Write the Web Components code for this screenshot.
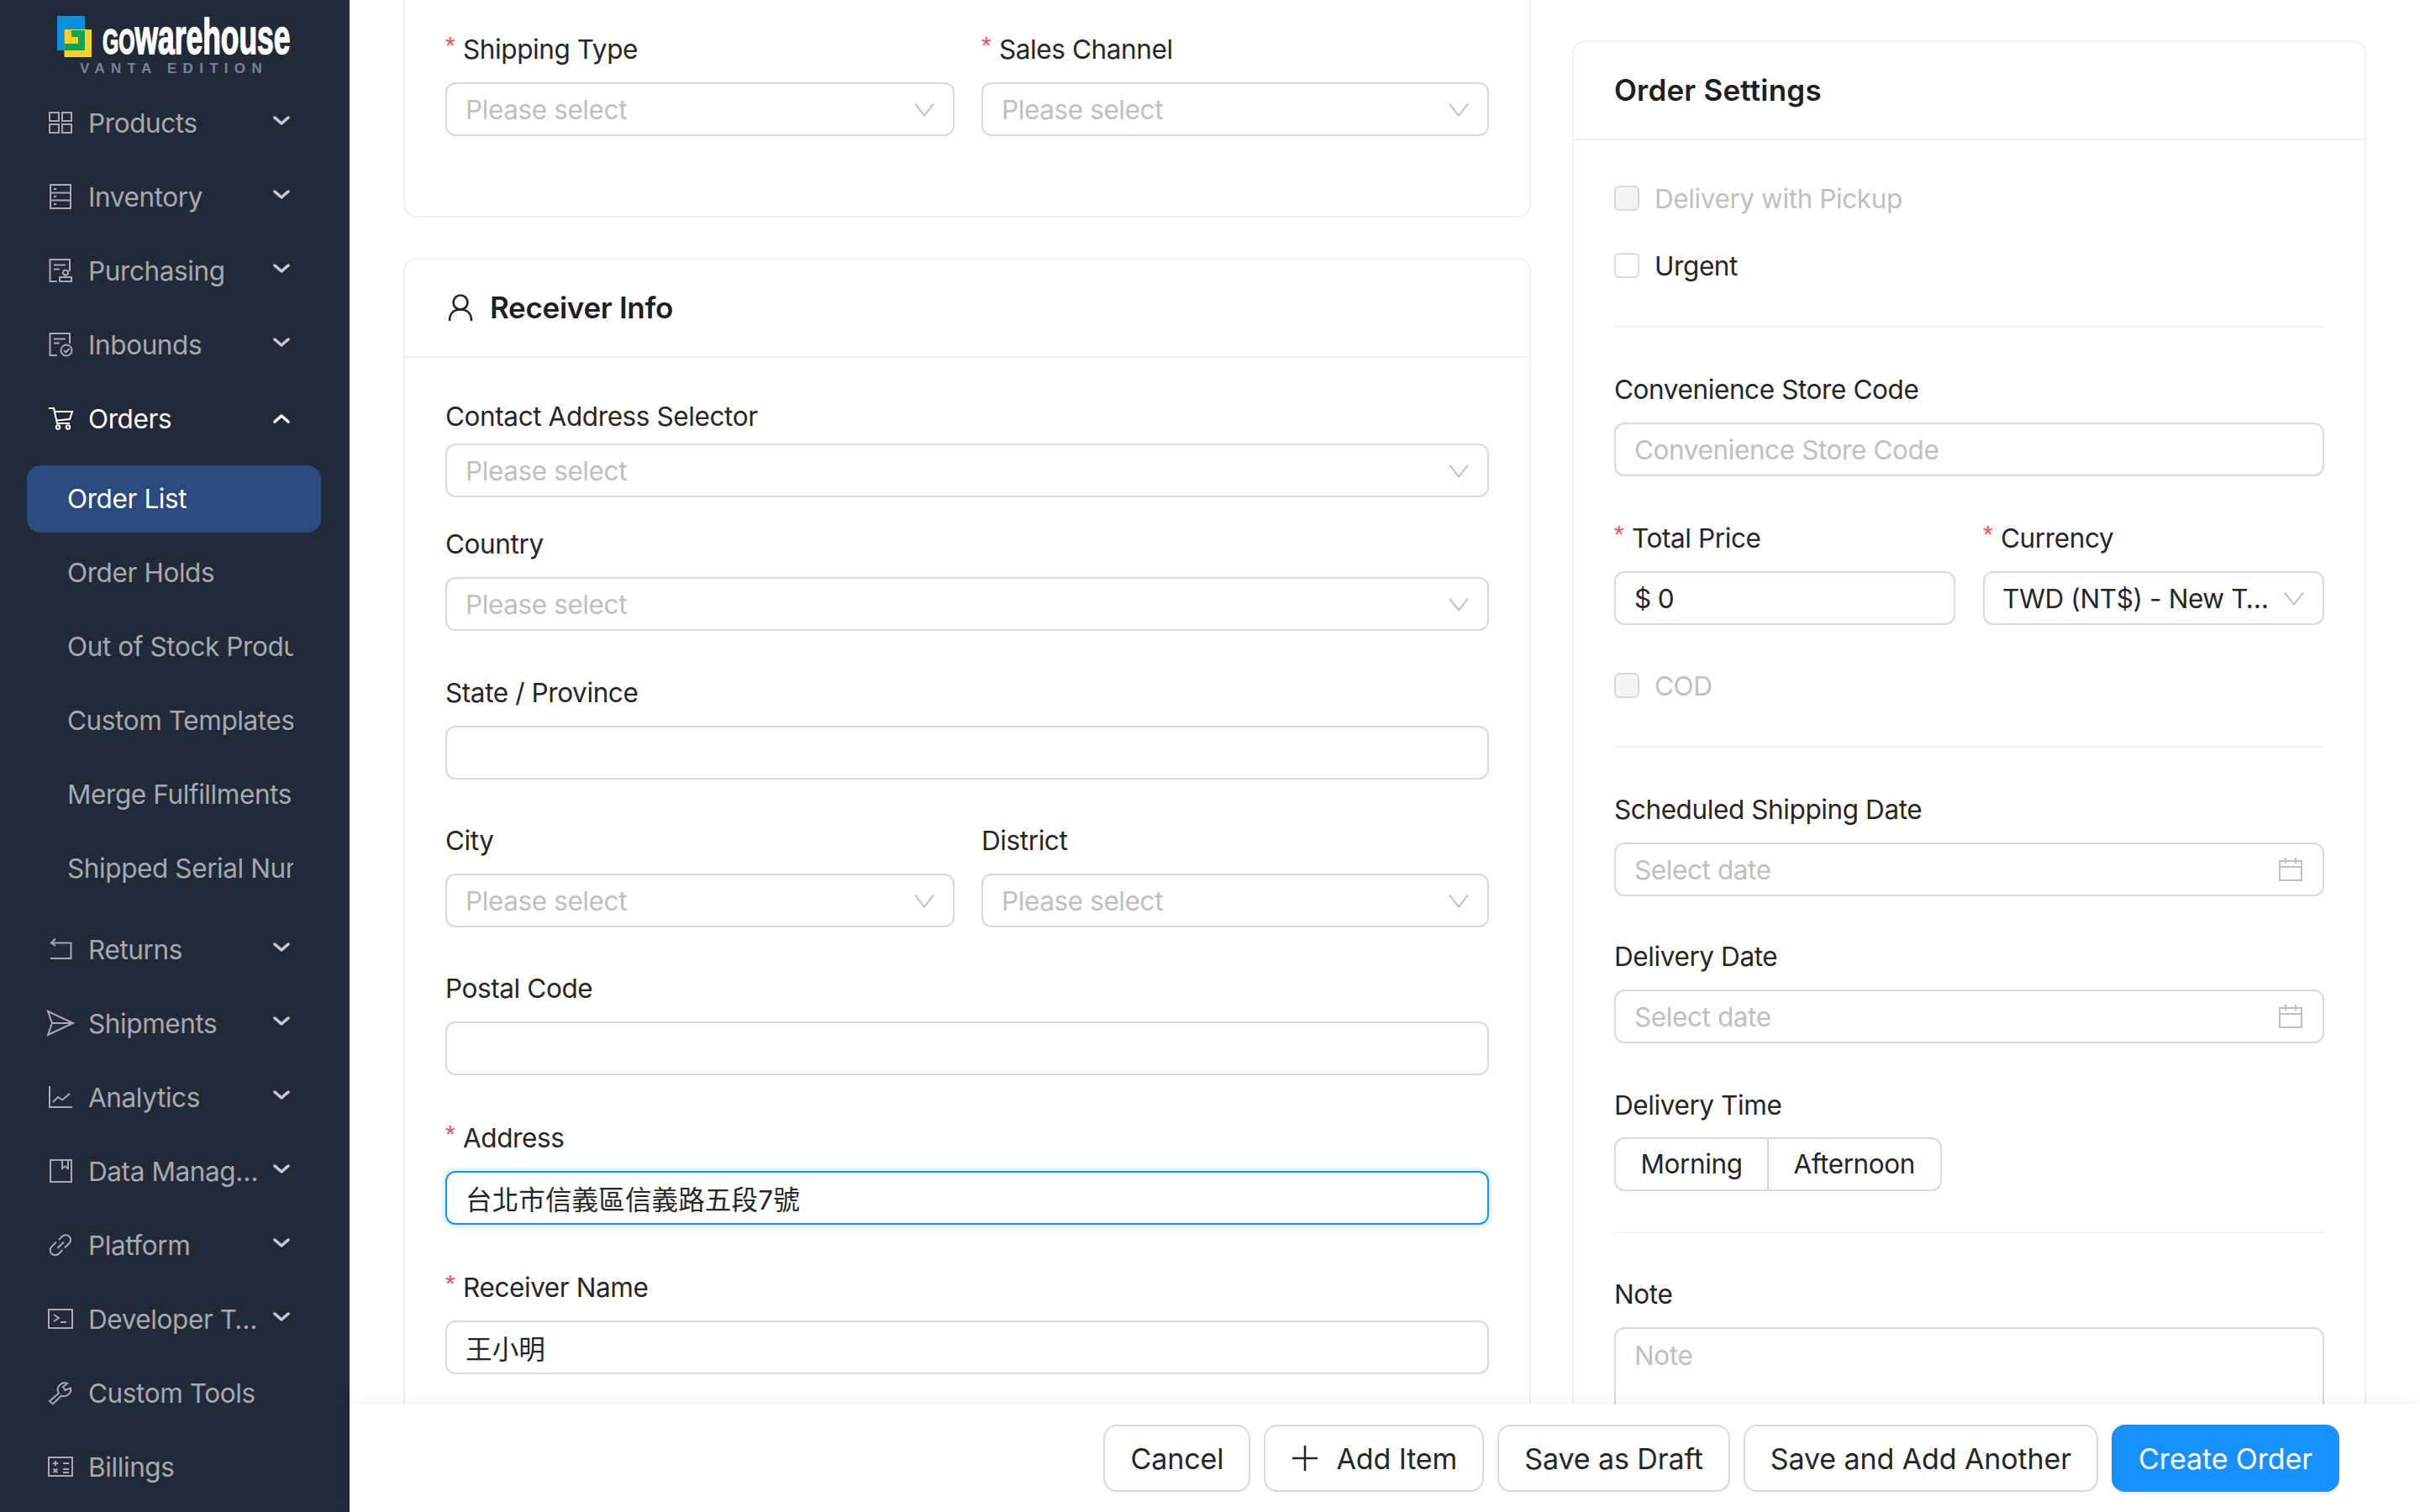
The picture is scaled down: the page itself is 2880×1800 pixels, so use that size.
<!DOCTYPE html>
<html lang="en">
<head>
<meta charset="utf-8">
<title>Create Order</title>
<style>
  html, body { margin: 0; height: 100%; background: #fff; overflow: hidden; }
  body { display: flex; font-family: Inter, "Noto Sans CJK TC", sans-serif; letter-spacing: -.4px; color: #262626; }
</style>
</head>
<body>

<side-bar>
  <nav-item icon="appstore" arrow="down">Products</nav-item>
  <nav-item icon="database" arrow="down">Inventory</nav-item>
  <nav-item icon="audit" arrow="down">Purchasing</nav-item>
  <nav-item icon="filedone" arrow="down">Inbounds</nav-item>
  <nav-item icon="cart" arrow="up" open>Orders</nav-item>
  <nav-group>
    <nav-sub active>Order List</nav-sub>
    <nav-sub>Order Holds</nav-sub>
    <nav-sub>Out of Stock Products</nav-sub>
    <nav-sub>Custom Templates</nav-sub>
    <nav-sub>Merge Fulfillments</nav-sub>
    <nav-sub>Shipped Serial Numbers</nav-sub>
  </nav-group>
  <nav-item icon="rollback" arrow="down">Returns</nav-item>
  <nav-item icon="send" arrow="down">Shipments</nav-item>
  <nav-item icon="chart" arrow="down">Analytics</nav-item>
  <nav-item icon="book" arrow="down">Data Management</nav-item>
  <nav-item icon="link" arrow="down">Platform</nav-item>
  <nav-item icon="code" arrow="down">Developer Tools</nav-item>
  <nav-item icon="tool">Custom Tools</nav-item>
  <nav-item icon="calc">Billings</nav-item>
</side-bar>

<main-pane>
  <div slot="left">
    <form-card style="--card-mt:-40px;--body-pt:76px;--body-pb:95px;--card-mb:48px">
      <div style="display:grid;grid-template-columns:606px 604px;gap:32px">
        <form-field required label="Shipping Type" style="--field-mb:0"><text-box type="select" placeholder="Please select"></text-box></form-field>
        <form-field required label="Sales Channel" style="--field-mb:0"><text-box type="select" placeholder="Please select"></text-box></form-field>
      </div>
    </form-card>

    <form-card heading="Receiver Info" icon style="--body-pt:49px;--body-pb:100px">
      <form-field label="Contact Address Selector" style="--label-gap:13px;--field-mb:35px"><text-box type="select" placeholder="Please select"></text-box></form-field>
      <form-field label="Country" style="--field-mb:53px"><text-box type="select" placeholder="Please select"></text-box></form-field>
      <form-field label="State / Province"><text-box></text-box></form-field>
      <div style="display:grid;grid-template-columns:606px 604px;gap:32px">
        <form-field label="City"><text-box type="select" placeholder="Please select"></text-box></form-field>
        <form-field label="District"><text-box type="select" placeholder="Please select"></text-box></form-field>
      </div>
      <form-field label="Postal Code" style="--field-mb:54px"><text-box></text-box></form-field>
      <form-field required label="Address" style="--field-mb:54px"><text-box focused value="台北市信義區信義路五段7號" style="--box-ls:.15px"></text-box></form-field>
      <form-field required label="Receiver Name"><text-box value="王小明" style="--box-ls:.15px"></text-box></form-field>
    </form-card>
  </div>

  <div slot="right" style="padding-top:48px">
    <form-card heading="Order Settings" style="--body-pt:49px;--body-pb:100px;--title-ls:.2px">
      <check-row disabled>Delivery with Pickup</check-row>
      <check-row>Urgent</check-row>
      <line-rule></line-rule>
      <form-field label="Convenience Store Code" style="--field-mb:53px"><text-box placeholder="Convenience Store Code"></text-box></form-field>
      <div style="display:grid;grid-template-columns:406px 406px;gap:33px">
        <form-field required label="Total Price"><text-box prefix="$" value="0"></text-box></form-field>
        <form-field required label="Currency"><text-box type="select" value="TWD (NT$) - New Taiwan Dollar" style="--box-pl:21px"></text-box></form-field>
      </div>
      <check-row disabled>COD</check-row>
      <line-rule style="--rule-mb:53px"></line-rule>
      <form-field label="Scheduled Shipping Date" style="--field-mb:51px"><text-box type="date" placeholder="Select date"></text-box></form-field>
      <form-field label="Delivery Date" style="--field-mb:53px"><text-box type="date" placeholder="Select date"></text-box></form-field>
      <form-field label="Delivery Time" style="--label-gap:19px;--field-mb:0"><radio-pair first="Morning" second="Afternoon"></radio-pair></form-field>
      <line-rule style="--rule-mt:48px;--rule-mb:52px"></line-rule>
      <form-field label="Note"><text-box type="area" placeholder="Note"></text-box></form-field>
    </form-card>
  </div>

  <action-button slot="actions">Cancel</action-button>
  <action-button slot="actions" plus>Add Item</action-button>
  <action-button slot="actions">Save as Draft</action-button>
  <action-button slot="actions">Save and Add Another</action-button>
  <action-button slot="actions" primary>Create Order</action-button>
</main-pane>

<script>
// sidebar icons, all drawn on a 28 box
const navIcons = {
  appstore: '<rect x="1" y="2" width="11" height="10"/><rect x="16" y="2" width="11" height="10"/><rect x="1" y="16" width="11" height="10"/><rect x="16" y="16" width="11" height="10"/>',
  database: '<rect x="2" y="0" width="24" height="28"/><path d="M2 9.5H26M2 18.5H26M6 5H9M6 14H9M6 23H9"/>',
  audit: '<path d="M10 27H1.500V1H25V15M6 7.500H20M6 12.500H13"/><circle cx="20" cy="16.500" r="3"/><path d="M20 19.500V22"/><rect x="13" y="22" width="14" height="5"/>',
  filedone: '<path d="M10 27H1.500V1H25V13M6 7.500H20M6 12.500H13"/><circle cx="21" cy="21" r="6.500"/><path d="M18 21L20.500 23.500L24.500 19"/>',
  cart: '<path d="M0 2H6L10 20H25M7 6H28L25 15L9 16.500"/><circle cx="11" cy="24.500" r="2.200"/><circle cx="23" cy="24.500" r="2.200"/>',
  rollback: '<path d="M8 1.500L3 6.500L8 10M3 6.500H26.500V25H2"/>',
  send: '<path d="M-1 0L29 14L-1 28L4 14ZM4 14H29"/>',
  chart: '<path d="M1 1V26H28M5 20L11 14L16 17.500L25 10"/>',
  book: '<rect x="2" y="1" width="25" height="26"/><path d="M16 1V11L19.500 8.500L23 11V1"/>',
  link: '<path d="M12 8L16 4A5.700 5.700 0 0 1 24.500 12L19 17.500M16.500 20L12 24.500A5.700 5.700 0 0 1 3.500 16L9 10.500M10.500 18L18 10.500"/>',
  code: '<rect x="0" y="3" width="28" height="22"/><path d="M6 9L12 13L6 17M14 18H21"/>',
  tool: '<path d="M1 24L12 14.500A8 8 0 0 1 22 3L17 7L19.500 11L26 8.500A8 8 0 0 1 15 17.500L5 27.500Z"/>',
  calc: '<rect x="0" y="3" width="28" height="22"/><path d="M5 10H11M8 7V13M17 10H24M5.500 16.500L10.500 21M10.500 16.500L5.500 21M17 17H24M17 21H24"/>'
};

const chevronPaths = { down: 'M2 2L10 9L18 2', up: 'M2 9L10 2L18 9' };

class SideBar extends HTMLElement {
  connectedCallback() {
    this.attachShadow({ mode: 'open' }).innerHTML = `
      <style>
        :host { display: block; flex: none; width: 416px; height: 100%; background: #222939; overflow: hidden; }
        .logo { height: 106px; box-sizing: border-box; position: relative; }
        .brand { display: flex; align-items: flex-start; padding: 19px 0 0 68px; }
        svg { flex: none; width: 41px; height: 49px; }
        .name { font: 700 60px/48px "Liberation Sans", sans-serif; letter-spacing: 0; color: #fff; -webkit-text-stroke: 1.600px #fff; margin: 1px 0 0 13px; transform: scaleX(.59); transform-origin: 0 0; white-space: nowrap; }
        .name b { font-variant-caps: small-caps; }
        .edition { position: absolute; left: 95px; top: 73px; font: 700 17px/18px "Liberation Sans", sans-serif; letter-spacing: 7.300px; color: #76849b; white-space: nowrap; }
      </style>
      <div class="logo">
        <div class="brand">
          <svg viewBox="0 0 41 49">
            <path fill="#0a8fdc" d="M0 0H33V16H8.500V41H0Z"/>
            <rect fill="#fed02b" x="8.500" y="16" width="32.500" height="33"/>
            <path fill="#0ba758" d="M17 17H33V41H8.500V33H25V25H17Z"/>
          </svg>
          <span class="name"><b>go</b>warehouse</span>
        </div>
        <span class="edition">VANTA EDITION</span>
      </div>
      <slot></slot>`;
  }
}

class NavItem extends HTMLElement {
  connectedCallback() {
    const arrow = this.getAttribute('arrow');
    this.attachShadow({ mode: 'open' }).innerHTML = `
      <style>
        :host { display: flex; align-items: center; height: 80px; margin: 0 34px 8px 32px; padding: 0 37px 0 26px; font-size: 31.500px; color: #a7a9b1; }
        :host([open]) { color: #fff; }
        .icon { flex: none; width: 28px; height: 28px; margin-right: 19px; overflow: visible; fill: none; stroke: currentColor; stroke-width: 2; }
        .text { flex: 1; min-width: 0; overflow: hidden; white-space: nowrap; text-overflow: ellipsis; }
        .arrow { flex: none; width: 20px; height: 11px; margin-left: 12px; margin-top: -6px; fill: none; stroke: #c9cbd1; stroke-width: 3.500; stroke-linecap: round; stroke-linejoin: round; }
        :host([open]) .arrow { stroke: #fff; margin-top: 0; }
      </style>
      <svg class="icon" viewBox="0 0 28 28">${navIcons[this.getAttribute('icon')]}</svg>
      <span class="text"><slot></slot></span>
      ${arrow ? `<svg class="arrow" viewBox="0 0 20 11"><path d="${chevronPaths[arrow]}"/></svg>` : ''}`;
  }
}

class NavGroup extends HTMLElement {
  connectedCallback() {
    this.attachShadow({ mode: 'open' }).innerHTML = `
      <style>:host { display: block; padding: 8px 0 8px; }</style>
      <slot></slot>`;
  }
}

class NavSub extends HTMLElement {
  connectedCallback() {
    this.attachShadow({ mode: 'open' }).innerHTML = `
      <style>
        :host { display: block; height: 80px; line-height: 80px; margin: 0 34px 8px 32px; padding: 0 33px 0 48px; border-radius: 16px; font-size: 31.500px; color: #a7a9b1; }
        :host([active]) { background: #2b4a7d; color: #fff; }
        div { overflow: hidden; white-space: nowrap; }
      </style>
      <div><slot></slot></div>`;
  }
}

class MainPane extends HTMLElement {
  connectedCallback() {
    this.attachShadow({ mode: 'open' }).innerHTML = `
      <style>
        :host { display: flex; flex-direction: column; flex: 1; min-width: 0; height: 100%; }
        .scroll { flex: 1; min-height: 0; overflow: hidden; display: grid; grid-template-columns: 1342px 945px; gap: 49px; padding: 0 64px; }
        footer { flex: none; height: 128px; box-sizing: border-box; padding: 24px 96px 0 0; display: flex; justify-content: flex-end; gap: 16px; background: #fff; box-shadow: 0 -6px 16px rgba(0, 0, 0, .04); position: relative; }
      </style>
      <div class="scroll">
        <slot name="left"></slot>
        <slot name="right"></slot>
      </div>
      <footer><slot name="actions"></slot></footer>`;
  }
}

class FormCard extends HTMLElement {
  connectedCallback() {
    const heading = this.getAttribute('heading');
    const person = this.hasAttribute('icon')
      ? '<svg viewBox="0 0 30 32"><circle cx="15" cy="10" r="8.500"/><path d="M2 32C2 23 7 18.500 15 18.500S28 23 28 32"/></svg>'
      : '';
    this.attachShadow({ mode: 'open' }).innerHTML = `
      <style>
        :host { display: block; border: 2px solid #f0f0f0; border-radius: 16px; margin-top: var(--card-mt, 0); margin-bottom: var(--card-mb, 0); }
        header { display: flex; align-items: center; gap: 20px; height: 117px; box-sizing: border-box; padding: 0 48px 2px; border-bottom: 2px solid #f0f0f0; font-size: 35px; font-weight: 600; letter-spacing: var(--title-ls, -.3px); color: #1f1f1f; }
        svg { width: 30px; height: 32px; margin-left: 3px; fill: none; stroke: #262626; stroke-width: 2.600; }
        .body { padding: var(--body-pt, 48px) 48px var(--body-pb, 48px); }
      </style>
      ${heading ? `<header>${person}<span>${heading}</span></header>` : ''}
      <div class="body"><slot></slot></div>`;
  }
}

class FormField extends HTMLElement {
  connectedCallback() {
    const star = this.hasAttribute('required') ? '<span class="star">*</span>' : '';
    this.attachShadow({ mode: 'open' }).innerHTML = `
      <style>
        :host { display: block; margin-bottom: var(--field-mb, 52px); }
        label { display: flex; height: 40px; line-height: 42px; margin-bottom: var(--label-gap, 20px); font-size: 31.500px; color: #262626; white-space: nowrap; }
        .star { width: 21px; font: 30px/32px "Liberation Sans", sans-serif; color: #ff4d4f; }
      </style>
      <label>${star}${this.getAttribute('label')}</label>
      <slot></slot>`;
  }
}

class TextBox extends HTMLElement {
  connectedCallback() {
    const type = this.getAttribute('type');
    const value = this.getAttribute('value');
    const prefix = this.getAttribute('prefix');
    const shown = value || this.getAttribute('placeholder') || '';
    let tail = '';
    if (type === 'select') tail = '<svg class="tail" viewBox="0 0 24 17"><path d="M1 1.500L12 15.500L23 1.500"/></svg>';
    if (type === 'date') tail = '<svg class="tail date" viewBox="0 0 28 28"><rect x="1" y="4" width="26" height="23"/><path d="M1 11H27M8 0V7M20 0V7"/></svg>';
    this.attachShadow({ mode: 'open' }).innerHTML = `
      <style>
        :host { display: flex; align-items: center; height: 64px; box-sizing: border-box; padding: 0 22px 0 var(--box-pl, 22px); border: 2px solid #d9d9d9; border-radius: 12px; background: #fff; font-size: 31.500px; letter-spacing: var(--box-ls, -.4px); color: #262626; }
        :host([focused]) { border-color: #1890ff; box-shadow: 0 0 0 4px #e6f4ff; }
        :host([type="area"]) { align-items: flex-start; height: 180px; padding-top: 12px; }
        .text { flex: 1; min-width: 0; overflow: hidden; white-space: nowrap; text-overflow: ellipsis; }
        .hint { color: #bfbfbf; }
        .prefix { margin-right: 8px; }
        .tail { flex: none; width: 24px; height: 17px; margin-left: 16px; fill: none; stroke: #bfbfbf; stroke-width: 2; }
        .date { width: 28px; height: 28px; margin-right: 2px; stroke-width: 2; }
      </style>
      ${prefix ? `<span class="prefix">${prefix}</span>` : ''}
      <span class="text ${value ? '' : 'hint'}">${shown}</span>
      ${tail}`;
  }
}

class CheckRow extends HTMLElement {
  connectedCallback() {
    this.attachShadow({ mode: 'open' }).innerHTML = `
      <style>
        :host { display: flex; align-items: center; gap: 18px; height: 40px; margin-bottom: 40px; font-size: 31.500px; color: #262626; }
        .box { width: 30px; height: 30px; box-sizing: border-box; border: 2px solid #d9d9d9; border-radius: 6px; background: #fff; }
        :host([disabled]) { color: #bfbfbf; }
        :host([disabled]) .box { background: #f5f5f5; }
      </style>
      <span class="box"></span><span><slot></slot></span>`;
  }
}

class LineRule extends HTMLElement {
  connectedCallback() {
    this.attachShadow({ mode: 'open' }).innerHTML = `
      <style>:host { display: block; height: 2px; margin-top: var(--rule-mt, 52px); margin-bottom: var(--rule-mb, 53px); background: #f0f0f0; }</style>`;
  }
}

class RadioPair extends HTMLElement {
  connectedCallback() {
    this.attachShadow({ mode: 'open' }).innerHTML = `
      <style>
        :host { display: inline-flex; height: 64px; box-sizing: border-box; border: 2px solid #d9d9d9; border-radius: 12px; font-size: 31.500px; color: #262626; line-height: 60px; }
        span { padding: 0 29.500px; }
        span + span { border-left: 2px solid #d9d9d9; }
      </style>
      <span>${this.getAttribute('first')}</span><span>${this.getAttribute('second')}</span>`;
  }
}

class ActionButton extends HTMLElement {
  connectedCallback() {
    const plus = this.hasAttribute('plus')
      ? '<svg viewBox="0 0 30 30"><path d="M15 0V30M0 15H30"/></svg>'
      : '';
    this.attachShadow({ mode: 'open' }).innerHTML = `
      <style>
        :host { display: inline-flex; align-items: center; gap: 22px; height: 80px; box-sizing: border-box; padding: 0 30px; border: 2px solid #d9d9d9; border-radius: 16px; background: #fff; font-size: 34px; letter-spacing: -.100px; color: #262626; white-space: nowrap; box-shadow: 0 4px 0 rgba(0, 0, 0, .015); }
        :host([primary]) { background: #1890ff; border-color: #1890ff; color: #fff; box-shadow: 0 4px 0 rgba(5, 145, 255, .1); }
        svg { width: 30px; height: 30px; margin-left: 2px; fill: none; stroke: #262626; stroke-width: 2.500; }
      </style>
      ${plus}<span><slot></slot></span>`;
  }
}

customElements.define('side-bar', SideBar);
customElements.define('nav-item', NavItem);
customElements.define('nav-group', NavGroup);
customElements.define('nav-sub', NavSub);
customElements.define('main-pane', MainPane);
customElements.define('form-card', FormCard);
customElements.define('form-field', FormField);
customElements.define('text-box', TextBox);
customElements.define('check-row', CheckRow);
customElements.define('line-rule', LineRule);
customElements.define('radio-pair', RadioPair);
customElements.define('action-button', ActionButton);
</script>
</body>
</html>
